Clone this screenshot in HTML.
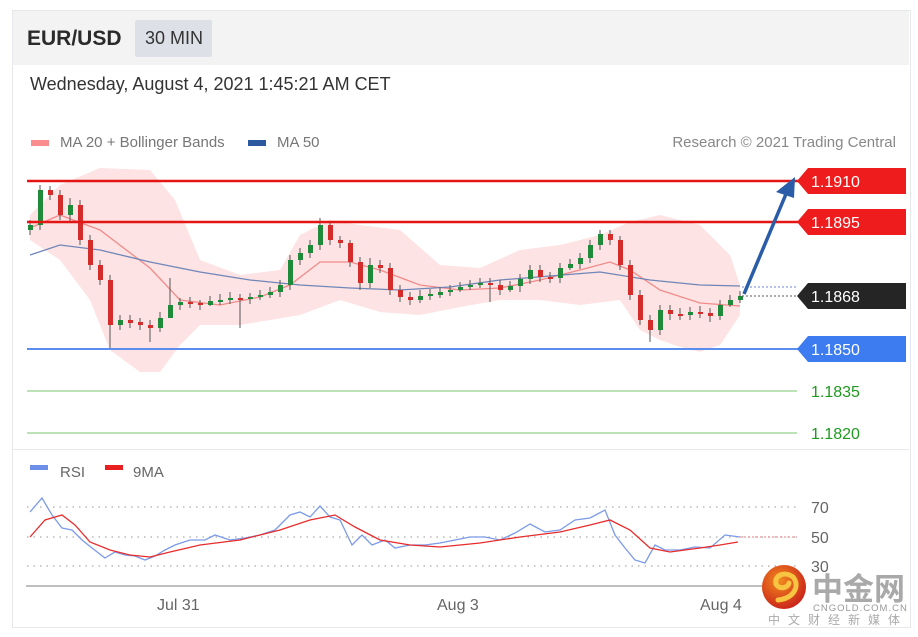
<!DOCTYPE html>
<html><head><meta charset="utf-8"><style>
body{margin:0;width:918px;height:637px;background:#fff;font-family:"Liberation Sans",sans-serif;position:relative;overflow:hidden}
.a{position:absolute;white-space:nowrap}
</style></head><body>
<div class="a" style="left:12px;top:10px;width:897px;height:616px;border:1px solid #e6e8ec"></div>
<div class="a" style="left:13px;top:11px;width:896px;height:54px;background:#f3f3f3"></div>
<div class="a" style="left:27px;top:27px;font-size:21px;font-weight:bold;color:#2a2a2a">EUR/USD</div>
<div class="a" style="left:135px;top:20px;width:77px;height:37px;background:#dde0e6;border-radius:2px"></div>
<div class="a" style="left:145px;top:28px;font-size:18px;color:#333">30 MIN</div>
<div class="a" style="left:30px;top:74px;font-size:18px;color:#333">Wednesday, August 4, 2021 1:45:21 AM CET</div>
<div class="a" style="left:31px;top:140px;width:18px;height:6px;background:#f98c8c"></div>
<div class="a" style="left:60px;top:134px;font-size:15px;color:#777">MA 20 + Bollinger Bands</div>
<div class="a" style="left:248px;top:140px;width:18px;height:6px;background:#2d5a9e"></div>
<div class="a" style="left:277px;top:134px;font-size:15px;color:#777">MA 50</div>
<div class="a" style="right:22px;top:134px;font-size:15px;color:#888">Research © 2021 Trading Central</div>
<div class="a" style="left:13px;top:449px;width:896px;height:1px;background:#e6e8ec"></div>
<div class="a" style="left:30px;top:465px;width:18px;height:5px;background:#6e8fe8"></div>
<div class="a" style="left:60px;top:464px;font-size:15px;color:#666">RSI</div>
<div class="a" style="left:105px;top:465px;width:18px;height:5px;background:#e82020"></div>
<div class="a" style="left:133px;top:464px;font-size:15px;color:#666">9MA</div>

<svg class="a" style="left:0;top:0" width="918" height="637">
<polygon fill="#fde3e3" points="30,215 60,185 100,168 150,170 175,200 200,260 240,275 280,270 300,235 330,220 360,225 400,230 440,265 480,268 520,250 560,245 600,235 630,222 660,215 700,225 730,255 740,285 740,315 720,345 700,352 680,347 660,340 640,330 620,300 580,305 540,300 500,300 460,307 420,315 380,312 340,300 300,315 270,320 240,325 200,325 180,345 160,372 140,372 110,350 90,300 60,260 30,240"/>
<polyline fill="none" stroke="#f28b8b" stroke-width="1.3" points="30,228 60,215 100,230 150,268 180,300 220,305 260,297 290,285 320,262 350,262 380,270 420,285 460,290 500,288 540,280 580,270 610,262 630,270 660,290 700,303 740,306"/>
<polyline fill="none" stroke="#6f86b8" stroke-width="1.3" points="30,255 60,245 100,250 150,262 200,272 250,280 300,285 350,288 400,290 450,287 500,280 550,276 600,272 650,280 700,285 740,286"/>
<g stroke="#555" stroke-width="1">
<path d="M30 220V235M40 185V230M50 186V200M60 190V220M70 198V222M80 200V245M90 235V270M100 260V285M110 275V348M120 315V330M130 315V328M140 318V330M150 320V342M160 312V332M170 278V310M180 298V310M190 297V308M200 300V310M210 296V306M220 294V305M230 292V304M240 294V328M250 293V304M260 290V300M270 287V298M280 280V297M290 255V290M300 248V265M310 240V258M320 218V250M330 222V245M340 236V248M350 240V267M360 257V290M370 258V288M380 260V273M390 263V295M400 285V302M410 292V305M420 290V303M430 289V300M440 287V298M450 285V296M460 282V292M470 280V290M480 278V288M490 278V302M500 280V295M510 281V292M520 274V292M530 265V284M540 265V282M550 272V283M560 263V283M570 259V270M580 253V269M590 240V263M600 230V250M610 230V245M620 236V270M630 260V300M640 290V325M650 315V342M660 305V335M670 305V320M680 308V320M690 307V320M700 306V318M710 308V322M720 300V320M730 295V307M740 291V303"/>
</g>
<g fill="#d42b2b">
<rect x="48" y="190" width="5" height="5"/><rect x="58" y="195" width="5" height="20"/><rect x="78" y="205" width="5" height="35"/><rect x="88" y="240" width="5" height="25"/><rect x="98" y="265" width="5" height="15"/><rect x="108" y="280" width="5" height="45"/><rect x="128" y="320" width="5" height="3"/><rect x="138" y="322" width="5" height="3"/><rect x="148" y="325" width="5" height="3"/><rect x="188" y="302" width="5" height="2"/><rect x="198" y="303" width="5" height="2"/><rect x="238" y="298" width="5" height="2"/><rect x="328" y="225" width="5" height="15"/><rect x="338" y="240" width="5" height="3"/><rect x="348" y="243" width="5" height="19"/><rect x="358" y="262" width="5" height="21"/><rect x="378" y="265" width="5" height="3"/><rect x="388" y="268" width="5" height="22"/><rect x="398" y="290" width="5" height="7"/><rect x="408" y="297" width="5" height="3"/><rect x="488" y="283" width="5" height="2"/><rect x="498" y="285" width="5" height="5"/><rect x="538" y="270" width="5" height="7"/><rect x="548" y="277" width="5" height="2"/><rect x="608" y="234" width="5" height="6"/><rect x="618" y="240" width="5" height="25"/><rect x="628" y="265" width="5" height="30"/><rect x="638" y="295" width="5" height="25"/><rect x="648" y="320" width="5" height="10"/><rect x="668" y="310" width="5" height="4"/><rect x="678" y="314" width="5" height="2"/><rect x="698" y="312" width="5" height="2"/><rect x="708" y="313" width="5" height="3"/>
</g>
<g fill="#1f8a3a">
<rect x="28" y="225" width="5" height="5"/><rect x="38" y="190" width="5" height="35"/><rect x="68" y="205" width="5" height="10"/><rect x="118" y="320" width="5" height="5"/><rect x="158" y="318" width="5" height="10"/><rect x="168" y="305" width="5" height="13"/><rect x="178" y="302" width="5" height="3"/><rect x="208" y="301" width="5" height="4"/><rect x="218" y="300" width="5" height="2"/><rect x="228" y="298" width="5" height="2"/><rect x="248" y="297" width="5" height="2"/><rect x="258" y="295" width="5" height="2"/><rect x="268" y="292" width="5" height="3"/><rect x="278" y="285" width="5" height="7"/><rect x="288" y="260" width="5" height="25"/><rect x="298" y="253" width="5" height="7"/><rect x="308" y="245" width="5" height="8"/><rect x="318" y="225" width="5" height="20"/><rect x="368" y="265" width="5" height="18"/><rect x="418" y="296" width="5" height="4"/><rect x="428" y="294" width="5" height="2"/><rect x="438" y="292" width="5" height="3"/><rect x="448" y="290" width="5" height="2"/><rect x="458" y="287" width="5" height="3"/><rect x="468" y="285" width="5" height="2"/><rect x="478" y="283" width="5" height="2"/><rect x="508" y="286" width="5" height="4"/><rect x="518" y="279" width="5" height="7"/><rect x="528" y="270" width="5" height="9"/><rect x="558" y="268" width="5" height="10"/><rect x="568" y="264" width="5" height="4"/><rect x="578" y="258" width="5" height="6"/><rect x="588" y="245" width="5" height="13"/><rect x="598" y="234" width="5" height="11"/><rect x="658" y="310" width="5" height="20"/><rect x="688" y="312" width="5" height="3"/><rect x="718" y="305" width="5" height="11"/><rect x="728" y="300" width="5" height="5"/><rect x="738" y="296" width="5" height="4"/>
</g>
<line x1="27" y1="181" x2="800" y2="181" stroke="#e41515" stroke-width="2.5"/>
<line x1="27" y1="222" x2="800" y2="222" stroke="#e41515" stroke-width="2.5"/>
<line x1="27" y1="349" x2="800" y2="349" stroke="#5b8def" stroke-width="2"/>
<line x1="27" y1="391" x2="797" y2="391" stroke="#a8d8a0" stroke-width="1.5"/>
<line x1="27" y1="433" x2="797" y2="433" stroke="#a8d8a0" stroke-width="1.5"/>
<line x1="742" y1="287" x2="797" y2="287" stroke="#6f86d8" stroke-width="1" stroke-dasharray="2,2"/>
<line x1="742" y1="296" x2="797" y2="296" stroke="#555" stroke-width="1" stroke-dasharray="2,2"/>
<line x1="744" y1="294" x2="786" y2="194" stroke="#2a5ca8" stroke-width="3.5"/>
<polygon points="795,177 776,192 794,198" fill="#2a5ca8"/>
<polygon points="797,181 808,168 906,168 906,194 808,194" fill="#ee1c1c"/>
<polygon points="797,222 808,209 906,209 906,235 808,235" fill="#ee1c1c"/>
<polygon points="797,296 808,283 906,283 906,309 808,309" fill="#252525"/>
<polygon points="797,349 808,336 906,336 906,362 808,362" fill="#3d7cf0"/>
<g font-family="Liberation Sans,sans-serif" font-size="16" fill="#fff">
<text x="811" y="187">1.1910</text><text x="811" y="228">1.1895</text><text x="811" y="302">1.1868</text><text x="811" y="355">1.1850</text>
</g>
<g font-family="Liberation Sans,sans-serif" font-size="16" fill="#1e9a1e">
<text x="811" y="397">1.1835</text><text x="811" y="439">1.1820</text>
</g>
<g stroke="#aaa" stroke-dasharray="1.5,5" stroke-width="1.3">
<line x1="27" y1="507" x2="797" y2="507"/><line x1="27" y1="537" x2="797" y2="537"/><line x1="27" y1="566" x2="797" y2="566"/>
</g>
<g font-family="Liberation Sans,sans-serif" font-size="16" fill="#666">
<text x="811" y="513">70</text><text x="811" y="543">50</text><text x="811" y="572">30</text>
<text x="157" y="610">Jul 31</text><text x="437" y="610">Aug 3</text><text x="700" y="610">Aug 4</text>
</g>
<polyline fill="none" stroke="#7b9ae8" stroke-width="1.3" points="30,512 42,498 52,515 62,528 72,530 82,540 92,548 105,558 115,552 125,555 135,556 145,560 155,556 165,550 175,545 190,540 205,540 215,535 230,540 245,538 260,535 275,530 290,515 300,512 310,517 320,506 330,517 340,520 352,545 362,535 372,545 385,540 395,548 410,545 425,545 440,543 455,540 470,537 485,537 500,540 515,533 530,524 545,532 560,530 575,520 590,518 605,510 615,535 625,548 635,560 645,563 655,545 665,550 680,550 695,547 710,548 725,535 740,537"/>
<polyline fill="none" stroke="#e87a7a" stroke-width="1" stroke-dasharray="2,2" points="740,537 797,537"/>
<polyline fill="none" stroke="#e82c2c" stroke-width="1.3" points="30,537 45,520 62,515 75,525 90,542 110,550 130,555 150,557 170,552 200,545 240,540 280,530 310,520 335,515 355,527 380,540 410,545 440,547 480,543 520,537 560,532 590,525 610,520 630,530 650,548 670,552 700,548 720,545 738,542"/>
<line x1="26" y1="586" x2="770" y2="586" stroke="#aaa" stroke-width="1.5"/>
<defs><radialGradient id="g" cx="40%" cy="35%" r="70%"><stop offset="0" stop-color="#f28a1e"/><stop offset="1" stop-color="#c9201a"/></radialGradient></defs>
<circle cx="784" cy="587" r="22" fill="url(#g)"/>
<path d="M778 600 C795 598 800 585 793 577 C785 571 774 575 776 584 C779 590 788 588 789 583" fill="none" stroke="#f7c542" stroke-width="5" stroke-linecap="round"/>
<text x="812" y="600" font-family="Noto Sans CJK SC,sans-serif" font-size="31" font-weight="bold" fill="#a9a9a9">中金网</text>
<text x="813" y="611" font-family="Liberation Sans,sans-serif" font-size="9.5" fill="#999" letter-spacing="1">CNGOLD.COM.CN</text>
<text x="768" y="624" font-family="Noto Sans CJK SC,sans-serif" font-size="12" fill="#aaa" letter-spacing="8">中文财经新媒体</text>
</svg>
</body></html>
